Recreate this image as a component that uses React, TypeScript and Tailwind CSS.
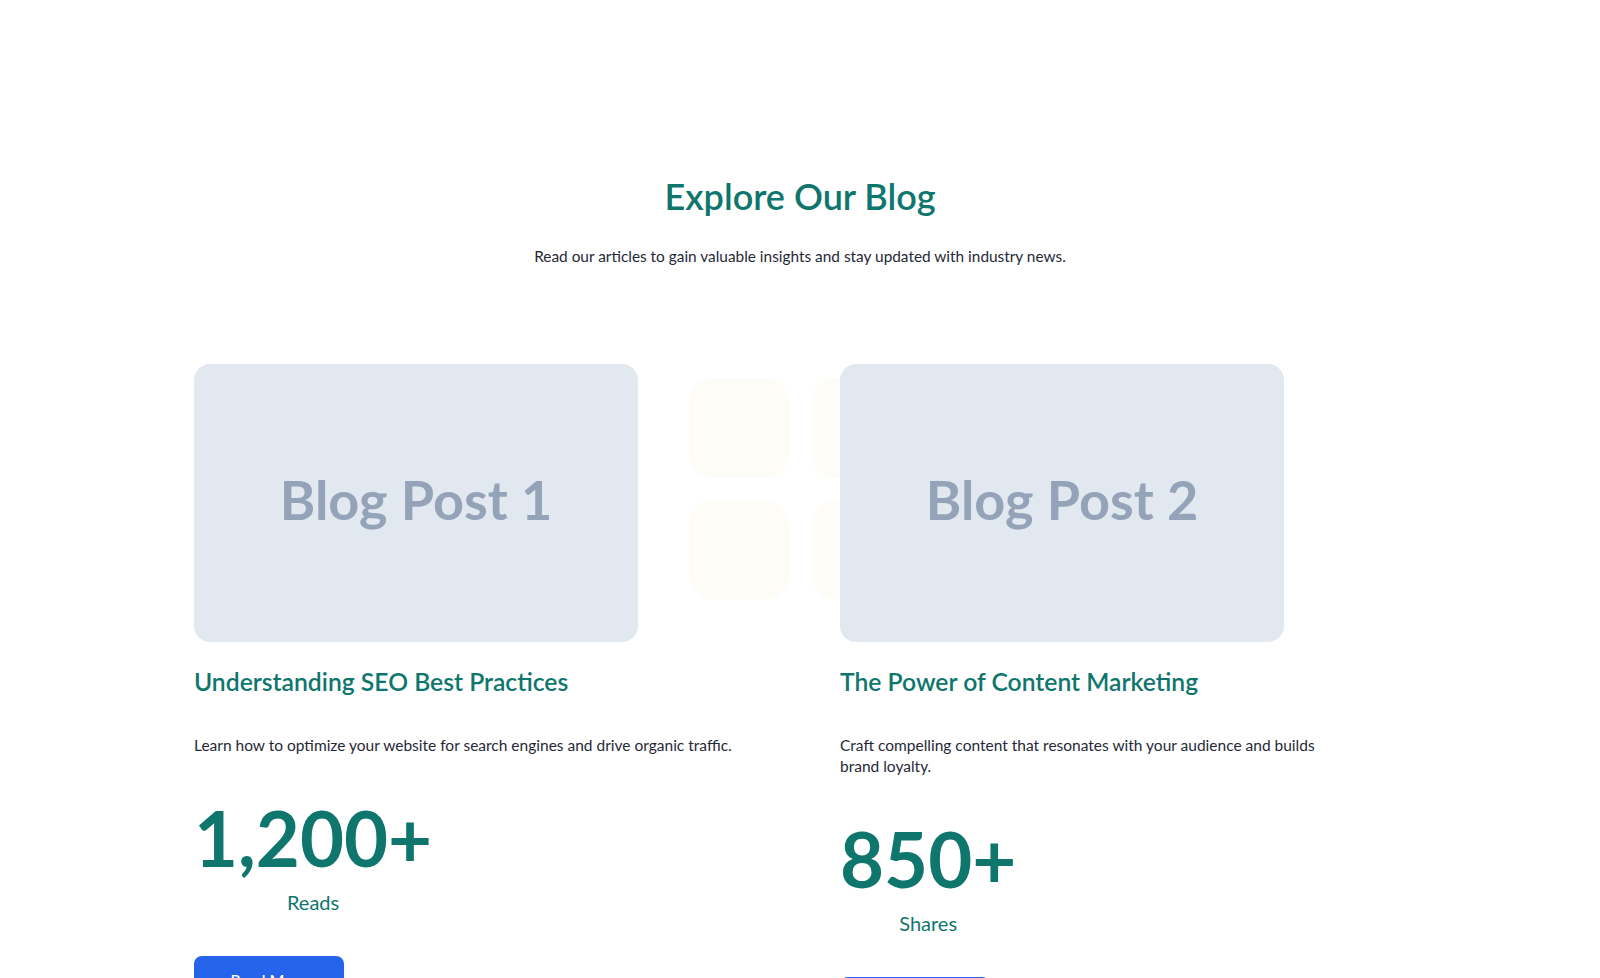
import React from "react";

interface Post {
	cover: string;
	title: string;
	summary: string;
	summaryWidth: string;
	stat: string;
	statLabel: string;
}

const posts: Post[] = [
	{
		cover: "Blog Post 1",
		title: "Understanding SEO Best Practices",
		summary:
			"Learn how to optimize your website for search engines and drive organic traffic.",
		summaryWidth: "max-w-[560px]",
		stat: "1,200+",
		statLabel: "Reads",
	},
	{
		cover: "Blog Post 2",
		title: "The Power of Content Marketing",
		summary:
			"Craft compelling content that resonates with your audience and builds brand loyalty.",
		summaryWidth: "max-w-[500px]",
		stat: "850+",
		statLabel: "Shares",
	},
];

const BlogCard = ({ post }: { post: Post }) => {
	return (
		<article className="relative z-10 flex flex-col items-start">
			<div className="w-[444px] h-[278px] pb-2 rounded-2xl bg-[#e2e8f0] flex items-center justify-center">
				<span className="font-['Lato',sans-serif] font-bold text-[54px] text-[#94a3b8]">
					{post.cover}
				</span>
			</div>
			<h3 className="mt-6 text-[24.7px] leading-8 font-semibold text-[#0f766e]">
				{post.title}
			</h3>
			<p
				className={`mt-[37px] ${post.summaryWidth} text-[15.5px] leading-[21px] text-[#1f2937]`}
			>
				{post.summary}
			</p>
			<div className="mt-[44px] inline-flex flex-col items-center">
				<span className="text-[76px] leading-none font-bold text-[#0f766e]">
					{post.stat}
				</span>
				<span className="mt-[12px] text-xl text-[#0f766e]">
					{post.statLabel}
				</span>
			</div>
			<button
				type="button"
				className="mt-10 w-[150px] h-12 rounded-lg bg-[#2563eb] text-white text-base font-medium"
			>
				Read More
			</button>
		</article>
	);
};

const App = () => {
	return (
		<main className="min-h-screen bg-white font-['Lato',sans-serif] overflow-hidden">
			<section className="pt-[176px]">
				<div className="text-center">
					<h2 className="text-4xl leading-10 font-semibold text-[#0f766e]">
						Explore Our Blog
					</h2>
					<p className="mt-7 text-[15.4px] leading-6 text-[#1f2937]">
						Read our articles to gain valuable insights and stay updated with
						industry news.
					</p>
				</div>

				<div className="relative mx-auto mt-24 w-[1212px] grid grid-cols-2 gap-x-20">
					{/* soft tile pattern peeking out between the covers */}
					<div className="absolute left-[495px] top-[14px] z-0 grid grid-cols-3 gap-x-[23px] gap-y-[22px]">
						<div className="w-[100px] h-[100px] rounded-3xl bg-[#fdfcf6]" />
						<div className="w-[100px] h-[100px] rounded-3xl bg-[#fdfcf6]" />
						<div className="w-[100px] h-[100px] rounded-3xl bg-[#fdfcf6]" />
						<div className="w-[100px] h-[100px] rounded-3xl bg-[#fdfcf6]" />
						<div className="w-[100px] h-[100px] rounded-3xl bg-[#fdfcf6]" />
						<div className="w-[100px] h-[100px] rounded-3xl bg-[#fdfcf6]" />
					</div>
					{posts.map((post) => (
						<BlogCard key={post.title} post={post} />
					))}
				</div>
			</section>
		</main>
	);
};

export default App;
